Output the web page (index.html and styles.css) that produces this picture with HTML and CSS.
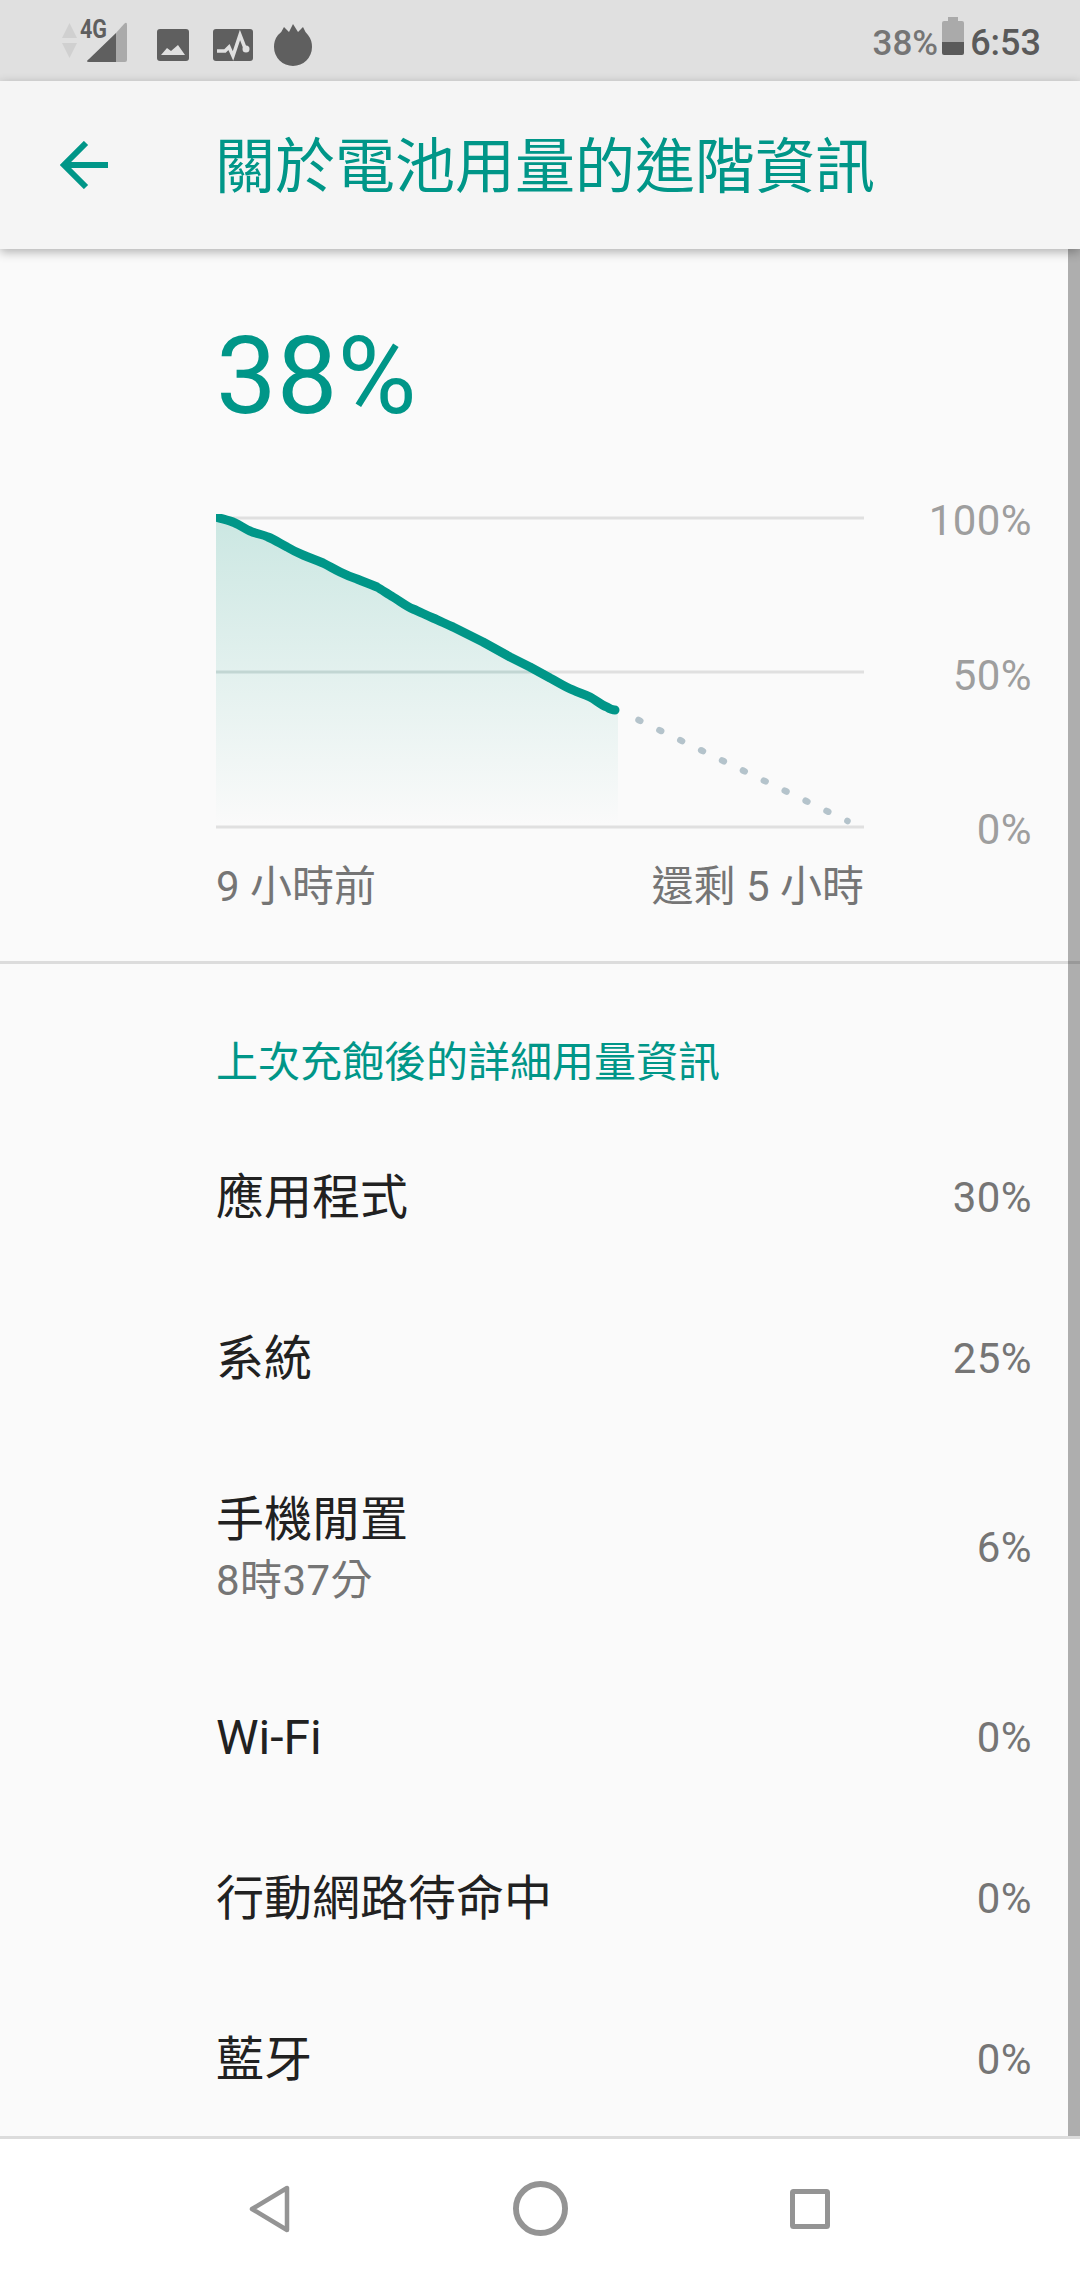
FILE: index.html
```html
<!DOCTYPE html>
<html lang="zh-Hant">
<head>
    <meta charset="UTF-8">
    <meta name="viewport" content="width=device-width, initial-scale=1.0">
    <title>關於電池用量的進階資訊</title>
    <link rel="stylesheet" href="styles.css">
</head>
<body>
    <div class="statusbar">
        <div class="status-icons">
            <svg class="icon-signal" width="72" height="52" viewBox="0 0 72 52">
                <path d="M9.5 9 L17 24 H2 Z M2 29 H17 L9.5 44 Z" fill="#d0d0d0"/>
                <text x="20" y="24" class="net-text" textLength="27" lengthAdjust="spacingAndGlyphs">4G</text>
                <path d="M29 45 L56 19 V48 H29 Q25 48 29 45 Z" fill="#5f5f5f"/>
                <path d="M56 19 L64 10 Q67 7 67 11 V46 Q67 48 65 48 H56 Z" fill="#aaa"/>
            </svg>
            <svg class="icon-image" width="32" height="32" viewBox="0 0 32 32">
                <rect width="32" height="32" rx="3" fill="#5f5f5f"/>
                <path d="M4 26 L10 19 L14 22 L21 16 L28 26 Z" fill="#e0e0e0"/>
            </svg>
            <svg class="icon-pulse" width="40" height="32" viewBox="0 0 40 32">
                <rect width="40" height="32" rx="3" fill="#5f5f5f"/>
                <path d="M4 22 H12 L16 18 L20 27 L27 6 L32 19" fill="none" stroke="#e0e0e0" stroke-width="3.5"/>
                <circle cx="33" cy="20" r="3.5" fill="#e0e0e0"/>
            </svg>
            <svg class="icon-flame" width="38" height="42" viewBox="0 0 38 42">
                <path d="M19 0 L24 8 L29 3 Q31 8 34 11 Q38 16 38 23 A19 19 0 0 1 0 23 Q0 16 4 11 Q8 8 10 3 L15 8 Z" fill="#5f5f5f"/>
            </svg>
        </div>
        <div class="status-right">
            <span class="status-pct">38%</span>
            <svg class="icon-battery" width="22" height="38" viewBox="0 0 22 38">
                <path d="M6 0 H16 V4 H20 Q22 4 22 6 V25 H0 V6 Q0 4 2 4 H6 Z" fill="#aaa"/>
                <path d="M0 25 H22 V36 Q22 38 20 38 H2 Q0 38 0 36 Z" fill="#5a5a5a"/>
            </svg>
            <span class="status-time">6:53</span>
        </div>
    </div>

    <div class="toolbar">
        <svg class="back-arrow" width="48" height="48" viewBox="0 0 48 48">
            <path d="M48 24 H4 M26 2 L4 24 L26 46" fill="none" stroke="#009688" stroke-width="6"/>
        </svg>
        <h1 class="toolbar-title">關於電池用量的進階資訊</h1>
    </div>

    <div class="content">
        <section class="battery-section">
            <div class="battery-level">38%</div>
            <div class="chart-row">
                <svg class="chart" width="648" height="320" viewBox="216 514 648 320">
                    <defs>
                        <linearGradient id="fade" x1="0" y1="0" x2="0" y2="1">
                            <stop offset="0" stop-color="#cbe7e2"/>
                            <stop offset="1" stop-color="#fafafa"/>
                        </linearGradient>
                        <clipPath id="chart-clip"><rect x="216" y="500" width="420" height="240"/></clipPath>
                    </defs>
                    <rect x="216" y="516.5" width="648" height="3" fill="#e0e0e0"/>
                    <rect x="216" y="670.5" width="648" height="3" fill="#e0e0e0"/>
                    <rect x="216" y="825.5" width="648" height="3" fill="#e0e0e0"/>
                    <path d="M216 517 L235 523 L250 531 L268 537 L287 547 L303 555 L323 563 L340 572 L357 579 L377 587 L393 597 L413 609 L433 618 L453 627 L483 642 L510 657 L530 667 L550 678 L573 690 L590 697 L607 707 L618 710 V825 H216 Z" fill="url(#fade)"/>
                    <rect x="216" y="670.5" width="330" height="3" fill="#c2d6d3"/>
                    <path d="M216 517 C222 519 229 520 235 523 C240 525 245 529 250 531 C256 534 262 534 268 537 C275 540 281 544 287 547 C292 550 298 553 303 555 C310 558 316 560 323 563 C329 566 334 569 340 572 C346 575 351 577 357 579 C364 582 370 584 377 587 C382 590 388 594 393 597 C400 601 406 606 413 609 C420 612 426 615 433 618 C440 621 446 624 453 627 L483 642 L510 657 L530 667 L550 678 C558 682 565 687 573 690 C579 693 584 694 590 697 C596 700 601 705 607 707 C610 709 612 710 615 710" fill="none" stroke="#009688" stroke-width="9" stroke-linecap="round" stroke-linejoin="round" clip-path="url(#chart-clip)"/>
                    <path d="M638.5 720 L847.5 821" fill="none" stroke="#b4c3cb" stroke-width="6.5" stroke-linecap="round" stroke-dasharray="2 21.2"/>
                </svg>
                <div class="chart-axis">
                    <span>100%</span>
                    <span>50%</span>
                    <span>0%</span>
                </div>
            </div>
            <div class="chart-times">
                <span>9 小時前</span>
                <span>還剩 5 小時</span>
            </div>
        </section>

        <section class="usage-section">
            <div class="section-title">上次充飽後的詳細用量資訊</div>
            <div class="usage-row">
                <div class="usage-name">應用程式</div>
                <div class="usage-pct">30%</div>
            </div>
            <div class="usage-row">
                <div class="usage-name">系統</div>
                <div class="usage-pct">25%</div>
            </div>
            <div class="usage-row">
                <div>
                    <div class="usage-name">手機閒置</div>
                    <div class="usage-sub">8時37分</div>
                </div>
                <div class="usage-pct">6%</div>
            </div>
            <div class="usage-row">
                <div class="usage-name">Wi-Fi</div>
                <div class="usage-pct">0%</div>
            </div>
            <div class="usage-row">
                <div class="usage-name">行動網路待命中</div>
                <div class="usage-pct">0%</div>
            </div>
            <div class="usage-row">
                <div class="usage-name">藍牙</div>
                <div class="usage-pct">0%</div>
            </div>
        </section>

        <div class="scrollbar"></div>
    </div>

    <div class="navbar">
        <svg width="42" height="48" viewBox="0 0 42 48">
            <path d="M38 3 V45 L3 24 Z" fill="none" stroke="#949494" stroke-width="4.5" stroke-linejoin="round"/>
        </svg>
        <svg width="55" height="55" viewBox="0 0 56 56">
            <circle cx="28" cy="28" r="25" fill="none" stroke="#949494" stroke-width="6"/>
        </svg>
        <svg width="40" height="40" viewBox="0 0 40 40">
            <rect x="2.5" y="2.5" width="35" height="35" rx="1" fill="none" stroke="#949494" stroke-width="5"/>
        </svg>
    </div>
</body>
</html>
```

FILE: styles.css
```css
* {
    box-sizing: border-box;
}
body {
    margin: 0;
    width: 1080px;
    height: 2280px;
    overflow: hidden;
    display: flex;
    flex-direction: column;
    background-color: #fafafa;
    font-family: Roboto, "Noto Sans CJK TC", sans-serif;
}
.statusbar {
    height: 81px;
    flex-shrink: 0;
    background-color: #e0e0e0;
    display: flex;
    justify-content: space-between;
    align-items: flex-start;
    padding: 0 39px 0 60px;
}
.status-icons {
    display: flex;
    align-items: flex-start;
    padding-top: 14px;
}
.icon-image {
    margin: 15px 0 0 25px;
}
.icon-pulse {
    margin: 15px 0 0 24px;
}
.icon-flame {
    margin: 10px 0 0 21px;
}
.net-text {
    font-family: Roboto, sans-serif;
    font-size: 25px;
    font-weight: 700;
    fill: #5f5f5f;
}
.status-right {
    display: flex;
    align-items: flex-start;
    padding-top: 17px;
}
.status-pct {
    margin-top: 7px;
    font-size: 35px;
    line-height: 40px;
    font-weight: 500;
    color: #757575;
}
.icon-battery {
    margin: 0 6px 0 4px;
}
.status-time {
    margin-top: 5px;
    font-size: 36px;
    line-height: 42px;
    font-weight: 500;
    color: #5a5a5a;
}
.toolbar {
    height: 168px;
    flex-shrink: 0;
    position: relative;
    z-index: 2;
    background-color: #f5f5f5;
    box-shadow: 0 3px 10px rgba(0, 0, 0, 0.3);
    display: flex;
    align-items: center;
    padding-left: 60px;
}
.back-arrow {
    margin-right: 107px;
}
.toolbar-title {
    margin: 5px 0 0;
    font-size: 60px;
    line-height: 70px;
    font-weight: 400;
    color: #009688;
}
.content {
    flex-grow: 1;
    position: relative;
    overflow: hidden;
}
.scrollbar {
    position: absolute;
    top: 0;
    bottom: 0;
    right: 0;
    width: 12px;
    background-color: rgba(0, 0, 0, 0.3);
}
.battery-section {
    height: 715px;
    padding: 64px 0 0 216px;
    border-bottom: 3px solid #dcdcdc;
}
.battery-level {
    font-size: 108px;
    line-height: 127px;
    color: #009688;
}
.chart-row {
    display: flex;
    margin-top: 74px;
}
.chart {
    display: block;
}
.chart-axis {
    width: 168px;
    height: 359px;
    display: flex;
    flex-direction: column;
    justify-content: space-between;
    align-items: flex-end;
    font-size: 42px;
    line-height: 50px;
    letter-spacing: 0.4px;
    color: #9e9e9e;
    margin-top: -18px;
}
.chart-times {
    width: 648px;
    display: flex;
    justify-content: space-between;
    font-size: 42px;
    line-height: 52px;
    color: #757575;
    margin-top: 6px;
}
.section-title {
    padding: 68px 0 0 216px;
    font-size: 42px;
    line-height: 62px;
    color: #009688;
    height: 153px;
}
.usage-row {
    min-height: 161px;
    display: flex;
    justify-content: space-between;
    align-items: center;
    padding: 48px 48px 48px 216px;
}
.usage-name {
    font-size: 48px;
    line-height: 65px;
    color: #212121;
}
.usage-sub {
    font-size: 42px;
    line-height: 57px;
    letter-spacing: 0.4px;
    color: #757575;
}
.usage-pct {
    font-size: 42px;
    line-height: 50px;
    letter-spacing: 0.4px;
    color: #757575;
}
.navbar {
    height: 144px;
    flex-shrink: 0;
    position: relative;
    z-index: 2;
    background-color: #ffffff;
    border-top: 3px solid #dcdcdc;
    display: flex;
    align-items: center;
    padding: 0 0 2px 249px;
    gap: 222px;
}
```
